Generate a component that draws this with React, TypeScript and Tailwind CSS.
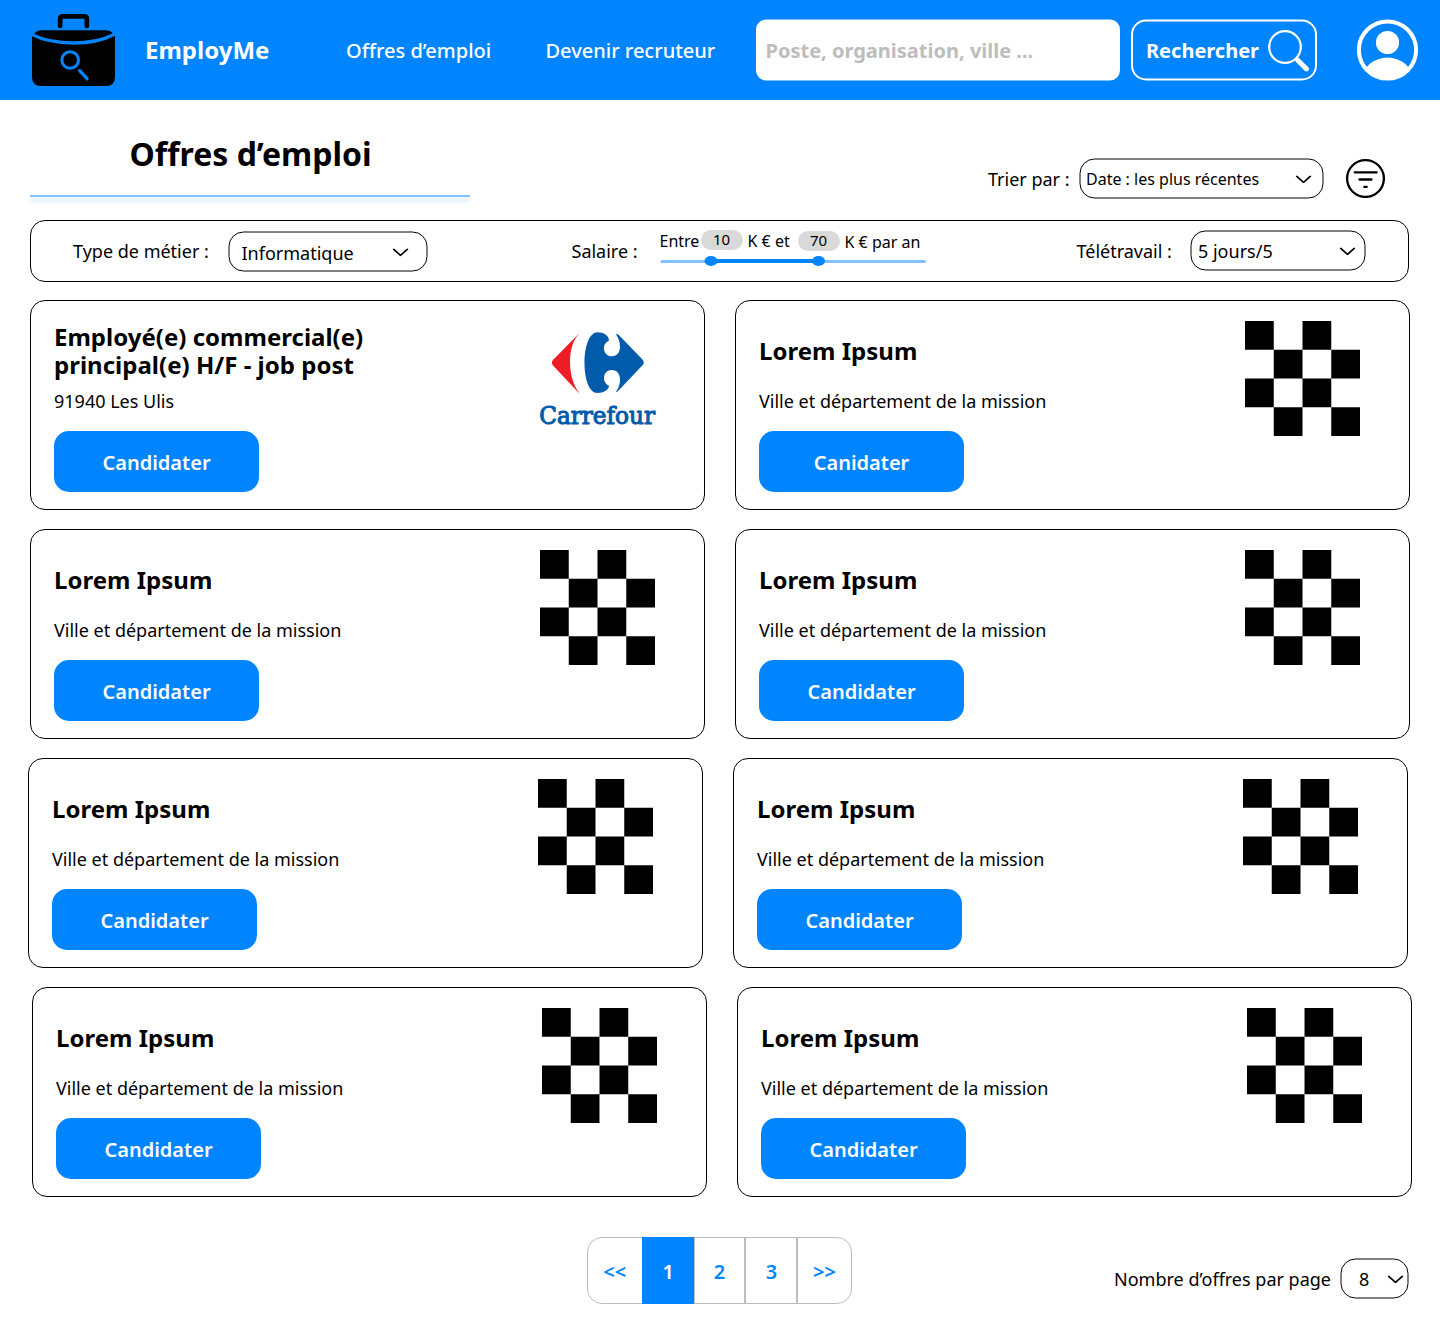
import React from "react";

type Job = { title: string; place: string; cta: string; logo?: "carrefour" };

const lorem: Job = {
  title: "Lorem Ipsum",
  place: "Ville et département de la mission",
  cta: "Candidater",
};

const rows: { indent: string; jobs: Job[] }[] = [
  {
    indent: "ml-[30px]",
    jobs: [
      {
        title: "Employé(e) commercial(e) principal(e) H/F - job post",
        place: "91940 Les Ulis",
        cta: "Candidater",
        logo: "carrefour",
      },
      { ...lorem, cta: "Canidater" },
    ],
  },
  { indent: "ml-[30px]", jobs: [lorem, lorem] },
  { indent: "ml-[28px]", jobs: [lorem, lorem] },
  { indent: "ml-[32px]", jobs: [lorem, lorem] },
];

function Briefcase() {
  return (
    <svg className="ml-8 mt-3.5 h-[72px] w-[83px] shrink-0" viewBox="96 42 249 216" fill="none">
      <path d="M180.500 78V57Q180.500 49 188.500 49H253Q260.500 49 260.500 57V78" stroke="#000" strokeWidth="14" strokeLinecap="round" />
      <path d="M103 102Q110 91 124 91H316Q331 91 338 100Q290 124 220 124Q150 124 103 102Z" fill="#000" />
      <path d="M96 109Q145 134 220 134Q295 134 345 107V230Q345 258 317 258H124Q96 258 96 230Z" fill="#000" />
      <circle cx="210.500" cy="180" r="25" stroke="#0085ff" strokeWidth="9" />
      <path d="M239 212L261 236" stroke="#0085ff" strokeWidth="10" strokeLinecap="round" />
    </svg>
  );
}

function Carrefour() {
  return (
    <svg className="h-[115px] w-[115px] overflow-visible" viewBox="0 0 115 115">
      <path d="M39.200 12.700C34 17 30 28 30 41C30 54 34 66 39.200 71.500C38.500 71.500 38 71 37 70L13 44.500Q10.700 41.500 13 39L37 14.500C38 13.500 38.700 12.900 39.200 12.700Z" fill="#ee1c25" />
      <path d="M77 13C77.700 13 78.500 13.800 79.500 14.800L102.500 38.500Q105 41.500 102.500 44.300L79.500 68.500C78.500 69.500 77.500 70.500 76.300 71.300C75.500 71.300 76 70.500 76.500 70C79 66.500 80 62.500 80 58.500C80 53 77 49 72 49C67 49 64 52.500 64 57C64 61.500 66.500 63.300 69 65C69 68.500 63.500 72 57.500 72C49.500 72 44.500 59 44.500 42C44.500 25 49.500 11.300 57.500 11.300C63.500 11.300 69 14.500 69 19.500C66.500 21 64 23 64 27C64 32 67 35.300 72 35.300C77 35.300 80 31 80 26C80 22 79 18 76.500 14.300C76 13.600 76.200 13 77 13Z" fill="#005baa" />
      <text x="-0.800" y="102.800" textLength="115.800" lengthAdjust="spacingAndGlyphs" fill="#005baa" stroke="#005baa" strokeWidth="1.100" strokeLinejoin="round" className="font-['DejaVu_Serif',serif] text-[24.500px] font-normal">
        Carrefour
      </text>
    </svg>
  );
}

function Checker() {
  return (
    <svg className="h-[115px] w-[115px]" viewBox="0 0 4 4">
      <path d="M0 0h1v1h1v1h-1v-1h-1zM2 0h1v1h1v1h-1v-1h-1zM0 2h1v1h1v1h-1v-1h-1zM2 2h1v1h1v1h-1v-1h-1z" fill="#000" />
    </svg>
  );
}

function Chevron() {
  return (
    <svg className="mt-px h-2 w-4 shrink-0" viewBox="0 0 16 8" fill="none" stroke="#000" strokeWidth="1.700" strokeLinecap="round" strokeLinejoin="round">
      <path d="M1 0.700L8 6.800L15 0.700" />
    </svg>
  );
}

function Select({ className, children }: { className: string; children: React.ReactNode }) {
  return (
    <div className={"flex h-10 shrink-0 translate-x-[0.5px] translate-y-[0.5px] items-center justify-between rounded-[15px] border border-black " + className}>
      {children}
      <Chevron />
    </div>
  );
}

function Card({ job }: { job: Job }) {
  return (
    <article className="flex h-[210px] w-[675px] justify-between rounded-[15px] border border-black pl-[23px] pr-[49px]">
      <div className="pt-[22px]">
        <h2 className="flex h-14 w-[330px] items-center text-2xl leading-7 font-bold tracking-[0.01px]">{job.title}</h2>
        <p className="mt-2 text-lg leading-7">{job.place}</p>
        <button className="mt-4 block h-[61px] w-[205px] rounded-[15px] bg-[#0085ff] pt-0.5 text-xl font-semibold text-white">{job.cta}</button>
      </div>
      <div className="pt-5">{job.logo ? <Carrefour /> : <Checker />}</div>
    </article>
  );
}

export default function App() {
  return (
    <div className="h-[1329px] w-[1440px] overflow-hidden bg-white font-['Noto_Sans',sans-serif] whitespace-nowrap text-black">
      <header className="flex h-[100px] bg-[#0085ff] text-white">
        <Briefcase />
        <div className="ml-[30px] w-[201px] text-2xl leading-[100px] font-bold">EmployMe</div>
        <a className="w-[199.500px] translate-y-[-0.5px] text-xl leading-[101px] font-medium">Offres d’emploi</a>
        <a className="w-[210.500px] translate-y-[-0.5px] text-xl leading-[101px] font-medium">Devenir recruteur</a>
        <div className="mt-[19px] h-[61px] w-[364px] translate-y-[0.5px] rounded-[10px] bg-white pl-[9.500px] text-xl leading-[61px] font-bold text-[#bdbdbd]">
          Poste, organisation, ville ...
        </div>
        <button className="mt-[19px] ml-[11px] flex h-[61px] w-[186px] translate-y-[0.5px] items-center rounded-[15px] border-2 border-white pl-[13px]">
          <span className="w-[121px] pt-px text-left text-xl font-bold">Rechercher</span>
          <svg className="h-[43px] w-[43px] shrink-0" viewBox="0 0 43 43" fill="none" stroke="#fff">
            <circle cx="18" cy="18.500" r="15.800" strokeWidth="2.200" />
            <path d="M29 30L31 32" strokeWidth="3" />
            <path d="M31 32L39.500 40.500" strokeWidth="5" strokeLinecap="round" />
          </svg>
        </button>
        <svg className="mt-[19px] ml-10 h-[62px] w-[62px]" viewBox="0 0 62 62">
          <clipPath id="disc">
            <circle cx="30.500" cy="31" r="30" />
          </clipPath>
          <circle cx="30.500" cy="31" r="28.600" fill="none" stroke="#fff" strokeWidth="4" />
          <circle cx="30.500" cy="23.500" r="11.600" fill="#fff" />
          <ellipse cx="30.500" cy="60" rx="25" ry="21.500" fill="#fff" clipPath="url(#disc)" />
        </svg>
      </header>

      <div className="flex h-[120px] justify-between pl-[30px]">
        <div className="w-[440px] pt-3">
          <h1 className="h-[83px] pl-px text-center text-[32px] leading-[84px] font-bold">Offres d’emploi</h1>
          <div className="h-0.5 bg-[#80c2ff] shadow-[0_4px_4px_rgba(0,133,255,0.25)]" />
        </div>
        <div className="flex pt-[58px] pr-[55px]">
          <span className="w-[91px] text-lg leading-[42px]">Trier par :</span>
          <Select className="w-[244px] pr-[11px] pl-[5.500px]">
            <span className="text-base">Date : les plus récentes</span>
          </Select>
          <svg className="ml-[22px] h-10 w-10" viewBox="0 0 40 40" fill="none" stroke="#000" strokeWidth="2.300" strokeLinecap="round">
            <circle cx="20.500" cy="20.500" r="18.400" />
            <path d="M9.700 14.300H31.700M14.500 21.500H26.500M19.300 28.900H21.700" />
          </svg>
        </div>
      </div>

      <section className="ml-[30px] flex h-[62px] w-[1379px] rounded-[15px] border border-black text-lg leading-[60px]">
        <span className="ml-[42px] w-[155px]">Type de métier :</span>
        <Select className="mt-[10px] w-[199px] pt-px pr-[18px] pl-3">
          <span className="pt-px leading-9">Informatique</span>
        </Select>
        <span className="ml-[144.500px] w-[88px]">Salaire :</span>
        <div className="w-[266px] pt-[9px] text-base leading-5">
          <div className="flex h-[21px]">
            <span className="w-[41px] pt-px">Entre</span>
            <span className="h-5 w-[42px] rounded-[10px] bg-[#d9d9d9] text-center text-[15px] leading-[19px]">10</span>
            <span className="ml-[5px] w-[50px] pt-px">K € et</span>
            <span className="mt-px h-5 w-[42px] rounded-[10px] bg-[#d9d9d9] text-center text-[15px] leading-[19px]">70</span>
            <span className="ml-[5px] pt-0.5">K € par an</span>
          </div>
          <svg className="mt-[5px] h-[10px] w-[266px]" viewBox="0 0 266 10">
            <rect x="0.500" y="4" width="265.500" height="3" rx="1.500" fill="#80c2ff" />
            <rect x="51" y="3" width="108" height="4" fill="#0085ff" />
            <ellipse cx="51" cy="5" rx="6.500" ry="5" fill="#0085ff" />
            <ellipse cx="158.500" cy="5" rx="6.500" ry="5" fill="#0085ff" />
          </svg>
        </div>
        <span className="ml-[151px] w-[113.500px]">Télétravail :</span>
        <Select className="mt-[9px] w-[175px] pr-[9px] pl-[6.500px]">
          <span className="leading-9">5 jours/5</span>
        </Select>
      </section>

      <main className="mt-[18px] flex flex-col gap-[19px]">
        {rows.map((row, i) => (
          <div key={i} className={"flex gap-[30px] whitespace-normal " + row.indent}>
            {row.jobs.map((job, j) => (
              <Card key={j} job={job} />
            ))}
          </div>
        ))}
      </main>

      <footer className="mt-10 flex pl-[587px]">
        <nav className="flex h-[67px] w-[265px] rounded-[15px] border border-[#bdbdbd] text-center text-xl leading-[67px] font-semibold text-[#0085ff]">
          <a className="w-[53.500px]">&lt;&lt;</a>
          <a className="-mt-px h-[67px] w-[52.500px] bg-[#0085ff] text-white">
            <span className="block pt-px pl-px">1</span>
          </a>
          <a className="w-[52px] border-r-2 border-l border-[#bdbdbd]">2</a>
          <a className="w-[52px] border-r-2 border-[#bdbdbd] pl-px">3</a>
          <a className="w-[53px]">&gt;&gt;</a>
        </nav>
        <span className="mt-[21px] ml-[262px] w-[226px] text-lg leading-[42px]">Nombre d’offres par page</span>
        <Select className="mt-[21px] w-[68px] pr-1 pl-[17.500px]">
          <span className="text-lg">8</span>
        </Select>
      </footer>
    </div>
  );
}
